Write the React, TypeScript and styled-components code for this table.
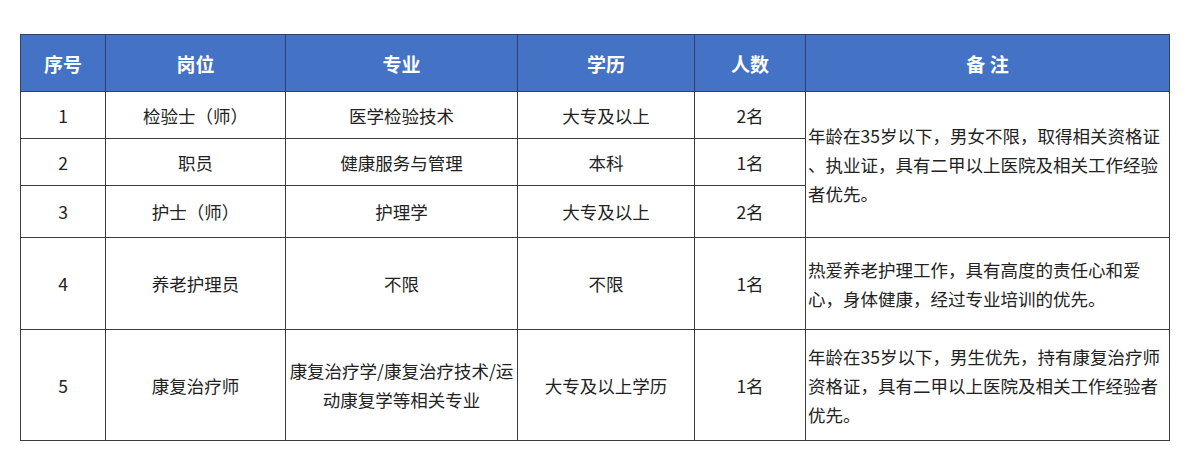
import React from 'react'
import styled, { createGlobalStyle } from 'styled-components'

const GlobalStyle = createGlobalStyle`
  html, body {
    margin: 0;
    padding: 0;
    background: #ffffff;
  }
  body {
    font-family: "Noto Sans CJK SC", "Noto Sans", sans-serif;
    color: #222222;
  }
`

type Row = {
    no: string
    post: string
    major: React.ReactNode
    edu: string
    count: string
}

const rows: Row[] = [
    { no: '1', post: '检验士（师）', major: '医学检验技术', edu: '大专及以上', count: '2名' },
    { no: '2', post: '职员', major: '健康服务与管理', edu: '本科', count: '1名' },
    { no: '3', post: '护士（师）', major: '护理学', edu: '大专及以上', count: '2名' },
    { no: '4', post: '养老护理员', major: '不限', edu: '不限', count: '1名' },
    {
        no: '5',
        post: '康复治疗师',
        major: <>康复治疗学/康复治疗技术/运<br/>动康复学等相关专业</>,
        edu: '大专及以上学历',
        count: '1名',
    },
]

const rowHeights = [47, 47, 52, 92, 111]

const App = () => {

    return (
        <Page>
            <GlobalStyle/>
            <Table>
                <colgroup>
                    <col style={{ width: 85 }}/>
                    <col style={{ width: 180 }}/>
                    <col style={{ width: 232 }}/>
                    <col style={{ width: 177 }}/>
                    <col style={{ width: 111 }}/>
                    <col style={{ width: 364 }}/>
                </colgroup>
                <thead>
                    <HeadRow>
                        <HeadCell>序号</HeadCell>
                        <HeadCell>岗位</HeadCell>
                        <HeadCell>专业</HeadCell>
                        <HeadCell>学历</HeadCell>
                        <HeadCell>人数</HeadCell>
                        <HeadCell>备&nbsp;注</HeadCell>
                    </HeadRow>
                </thead>
                <tbody>
                    {rows.map((row, i) => (
                        <tr key={row.no} style={{ height: rowHeights[i] }}>
                            <Cell>{row.no}</Cell>
                            <Cell>{row.post}</Cell>
                            <Cell>{row.major}</Cell>
                            <Cell>{row.edu}</Cell>
                            <Cell>{row.count}</Cell>
                            {i === 0 && (
                                <NoteCell rowSpan={3}>
                                    年龄在35岁以下，男女不限，取得相关资格证<br/>
                                    、执业证，具有二甲以上医院及相关工作经验<br/>
                                    者优先。
                                </NoteCell>
                            )}
                            {i === 3 && (
                                <NoteCell>
                                    热爱养老护理工作，具有高度的责任心和爱<br/>
                                    心，身体健康，经过专业培训的优先。
                                </NoteCell>
                            )}
                            {i === 4 && (
                                <NoteCell>
                                    年龄在35岁以下，男生优先，持有康复治疗师<br/>
                                    资格证，具有二甲以上医院及相关工作经验者<br/>
                                    优先。
                                </NoteCell>
                            )}
                        </tr>
                    ))}
                </tbody>
            </Table>
        </Page>
    )
}
export default App

const Page = styled.div`
  padding: 34px 0 0 20px;
`

const Table = styled.table`
  width: 1150px;
  table-layout: fixed;
  border-collapse: collapse;
  border: 1px solid #3c3c3c;
`

const HeadRow = styled.tr`
  height: 57px;
  background-color: #4472c4;
`

const HeadCell = styled.th`
  padding: 0;
  border: 1px solid #2f3f66;
  color: #ffffff;
  font-size: 19px;
  font-weight: 700;
  text-align: center;
  vertical-align: middle;
`

const Cell = styled.td`
  padding: 0;
  border: 1px solid #3c3c3c;
  font-size: 17.5px;
  line-height: 29px;
  text-align: center;
  vertical-align: middle;
  color: #222222;
`

const NoteCell = styled(Cell)`
  padding: 0 0 0 2px;
  text-align: left;
  white-space: nowrap;
`
